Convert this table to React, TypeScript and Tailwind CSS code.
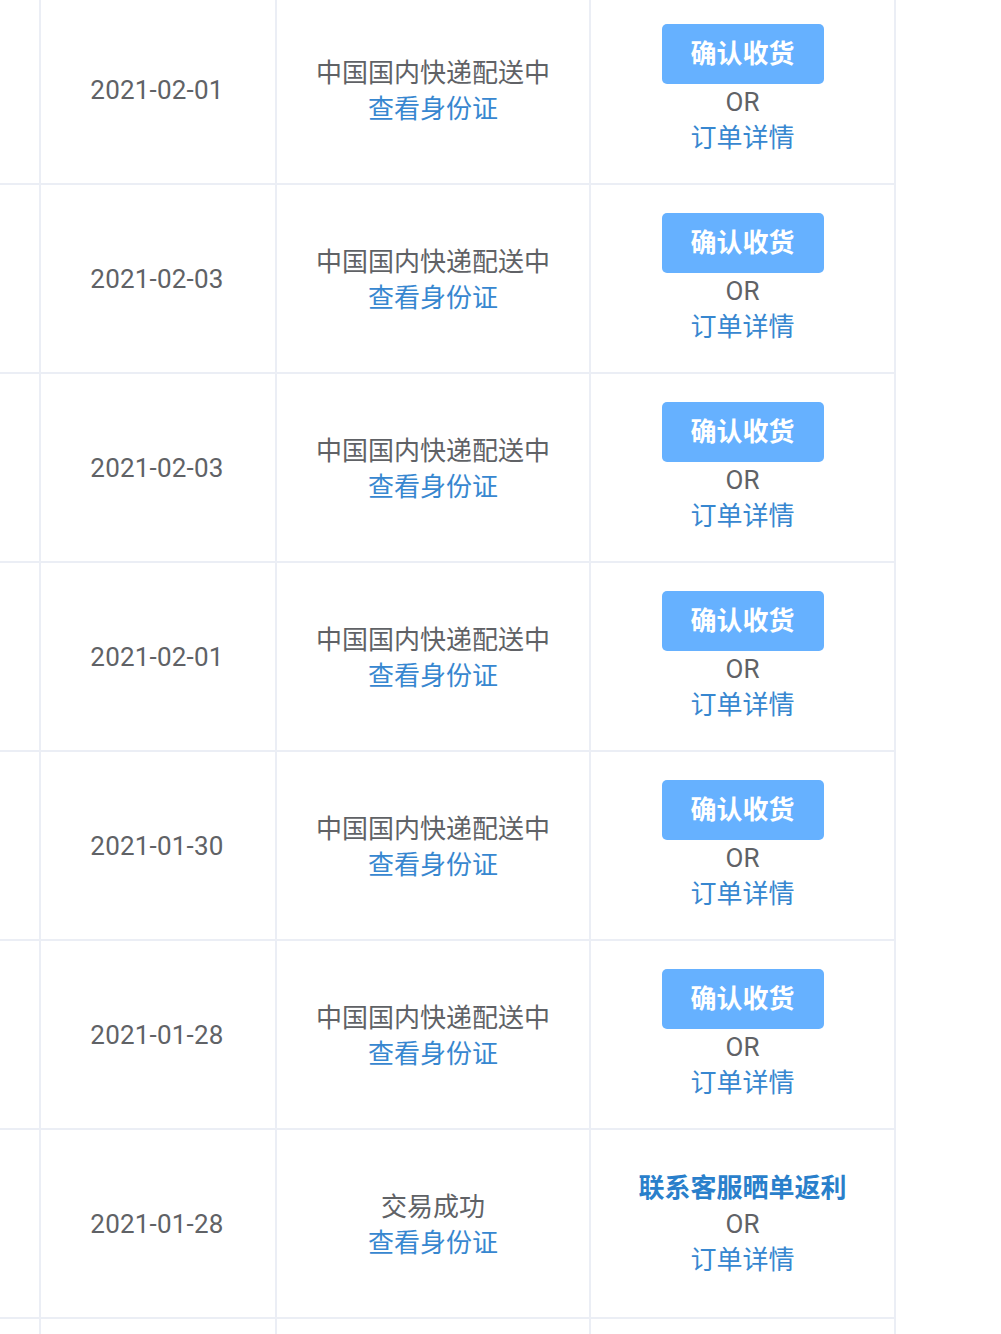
const rows = [
  { date: "2021-02-01", status: "中国国内快递配送中", done: false },
  { date: "2021-02-03", status: "中国国内快递配送中", done: false },
  { date: "2021-02-03", status: "中国国内快递配送中", done: false },
  { date: "2021-02-01", status: "中国国内快递配送中", done: false },
  { date: "2021-01-30", status: "中国国内快递配送中", done: false },
  { date: "2021-01-28", status: "中国国内快递配送中", done: false },
  { date: "2021-01-28", status: "交易成功", done: true },
]

export default function App() {
  return (
    <div
      className="h-[1334px] w-[1001px] overflow-hidden bg-white text-[26px] leading-[36px] text-[#606266]"
      style={{ fontFamily: "Roboto, 'Noto Sans CJK SC', sans-serif" }}
    >
      <div className="-mt-[4px] w-[896px]">
        {rows.map((row, i) => (
          <div
            key={i}
            className="grid h-[189px] grid-cols-[41px_236px_314px_305px] border-b-2 border-[#ebeef5]"
          >
            <div className="border-r-2 border-[#ebeef5]" />
            <div className="flex items-center justify-center border-r-2 border-[#ebeef5] pr-[2px] tracking-[0.2px]">
              {row.date}
            </div>
            <div className="flex flex-col items-center justify-center border-r-2 border-[#ebeef5] pt-[2px]">
              <span>{row.status}</span>
              <span className="text-[#3787d0]">查看身份证</span>
            </div>
            <div className="flex flex-col items-center justify-center border-r-2 border-[#ebeef5]">
              {row.done ? (
                <span className="font-bold text-[#2a7fcb]">联系客服晒单返利</span>
              ) : (
                <button className="h-[60px] w-[162px] rounded-[5px] bg-[#66b1ff] text-[26px] font-bold text-white">
                  确认收货
                </button>
              )}
              <span>OR</span>
              <span className="text-[#3787d0]">订单详情</span>
            </div>
          </div>
        ))}
        {/* next row, scrolled just into view */}
        <div className="grid h-[40px] grid-cols-[41px_236px_314px_305px]">
          <div className="border-r-2 border-[#ebeef5]" />
          <div className="border-r-2 border-[#ebeef5]" />
          <div className="border-r-2 border-[#ebeef5]" />
          <div className="border-r-2 border-[#ebeef5]" />
        </div>
      </div>
    </div>
  )
}
